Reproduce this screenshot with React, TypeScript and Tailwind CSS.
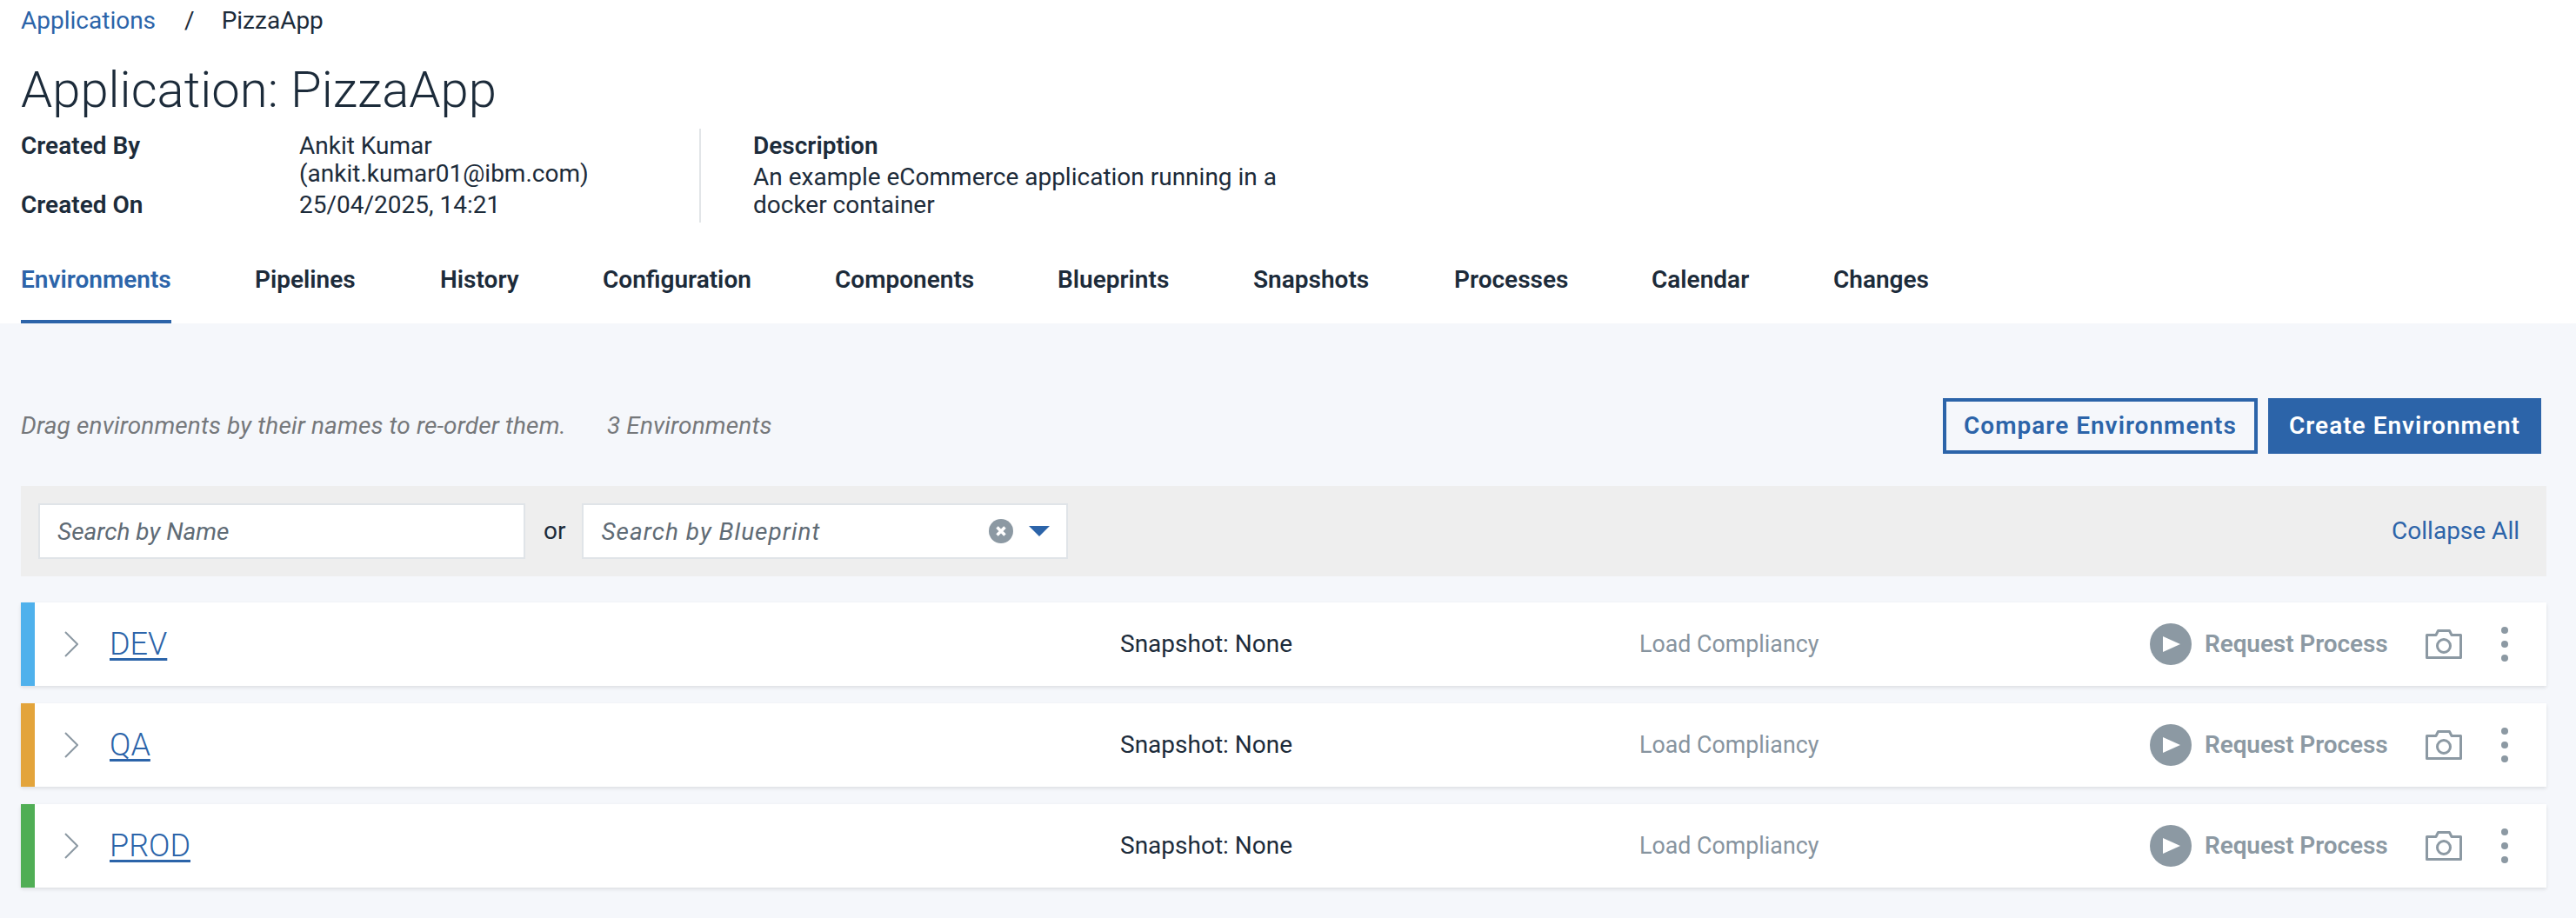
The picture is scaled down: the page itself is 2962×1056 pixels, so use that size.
const ROWS = [
  { name: "DEV", strip: "bg-[#4fb1ec]" },
  { name: "QA", strip: "bg-[#e3a43b]" },
  { name: "PROD", strip: "bg-[#50ae55]" },
];
const TABS = [
  { label: "Environments", w: "w-[173px]" },
  { label: "Pipelines", w: "w-[117px]" },
  { label: "History", w: "w-[91px]" },
  { label: "Configuration", w: "w-[171px]" },
  { label: "Components", w: "w-[160px]" },
  { label: "Blueprints", w: "w-[129px]" },
  { label: "Snapshots", w: "w-[135px]" },
  { label: "Processes", w: "w-[131px]" },
  { label: "Calendar", w: "w-[113px]" },
  { label: "Changes", w: "w-[109px]" },
];

function Chevron() {
  return (
    <svg width="16" height="30" viewBox="0 0 16 30" fill="none" className="shrink-0">
      <path d="M1 1 L15 15 L1 29" stroke="#8c99a3" strokeWidth="2" />
    </svg>
  );
}

function Camera() {
  return (
    <svg width="42" height="34" viewBox="0 0 42 34" fill="none" className="shrink-0">
      <path d="M1.500 6.500 H12 L14.500 1.500 H27.500 L30 6.500 H40.500 V32.500 H1.500 Z" stroke="#8c99a3" strokeWidth="3" strokeLinejoin="round" />
      <circle cx="21" cy="19" r="7.500" stroke="#8c99a3" strokeWidth="3" />
    </svg>
  );
}

function Play() {
  return (
    <svg width="48" height="48" viewBox="0 0 48 48" className="shrink-0">
      <circle cx="24" cy="24" r="24" fill="#8c99a3" />
      <path d="M15 15 V33 L35 24 Z" fill="#ffffff" />
    </svg>
  );
}

function Row({ name, strip }: { name: string; strip: string }) {
  return (
    <div className="flex h-[96px] w-[2904px] bg-white shadow-[0_2px_4px_rgba(0,0,0,0.1)]">
      <div className={`w-[16px] shrink-0 ${strip}`} />
      <div className="flex w-[1248px] shrink-0 items-center pl-[34px]">
        <Chevron />
        <a className="ml-[36px] text-[36px] font-light leading-[44px] text-[#2c64a9] underline decoration-[3px] underline-offset-[4px]">
          {name}
        </a>
      </div>
      <div className="flex w-[597px] shrink-0 items-center text-[28px] text-[#1c2b3a]">Snapshot: None</div>
      <div className="flex w-[587px] shrink-0 items-center text-[26.800px] text-[#87949f]">Load Compliancy</div>
      <div className="flex items-center">
        <Play />
        <span className="ml-[15px] w-[254px] shrink-0 whitespace-nowrap text-[28px] font-semibold tracking-[-0.1px] text-[#8c99a3]">
          Request Process
        </span>
        <Camera />
        <svg width="8" height="40" viewBox="0 0 8 40" className="ml-[45px] shrink-0">
          <circle cx="4" cy="4" r="4" fill="#8c99a3" />
          <circle cx="4" cy="20" r="4" fill="#8c99a3" />
          <circle cx="4" cy="36" r="4" fill="#8c99a3" />
        </svg>
      </div>
    </div>
  );
}

export default function App() {
  return (
    <div className="h-[1056px] w-[2962px] overflow-hidden bg-white font-['Roboto',sans-serif] text-[#1c2b3a]">
      <div className="flex h-[48px] items-center pl-[24px] text-[28px]">
        <a className="text-[#2c64a9]">Applications</a>
        <span className="ml-[33px]">/</span>
        <span className="ml-[31px]">PizzaApp</span>
      </div>
      <h1 className="ml-[24px] mt-[25px] h-[60px] text-[58px] font-light leading-[60px]">Application: PizzaApp</h1>
      <div className="ml-[24px] mt-[15px] flex h-[108px] text-[28px] leading-[32px]">
        <div className="grid w-[780px] shrink-0 grid-cols-[320px_1fr] grid-rows-[68px_32px] content-start pt-[4px]">
          <div className="font-semibold">Created By</div>
          <div>
            Ankit Kumar
            <br />
            (ankit.kumar01@ibm.com)
          </div>
          <div className="font-semibold">Created On</div>
          <div>25/04/2025, 14:21</div>
        </div>
        <div className="w-[2px] shrink-0 bg-[#e2e5e8]" />
        <div className="ml-[60px] w-[640px] pt-[4px]">
          <div className="mb-[4px] font-semibold">Description</div>
          <div>An example eCommerce application running in a docker container</div>
        </div>
      </div>
      <div className="mt-[30px] flex h-[86px] pl-[24px]">
        {TABS.map((t, i) => (
          <div
            key={t.label}
            className={`mr-[96px] flex shrink-0 items-center border-b-4 pb-[10px] text-[28px] font-semibold leading-[36px] ${t.w} ${
              i === 0 ? "border-[#2c64a9] text-[#2c64a9]" : "border-transparent"
            }`}
          >
            <span className="whitespace-nowrap">{t.label}</span>
          </div>
        ))}
      </div>
      <div className="h-[684px] bg-[#f5f7fb] px-[24px]">
        <div className="flex items-center pt-[86px]">
          <div className="flex w-[2210px] shrink-0 text-[28px] italic tracking-[0.12px] text-[#75787b]">
            <span className="w-[674px]">Drag environments by their names to re-order them.</span>
            <span>3 Environments</span>
          </div>
          <button className="flex h-[64px] w-[362px] items-center justify-center border-4 border-[#2c64a9] text-[28px] font-semibold tracking-[1px] text-[#2c64a9]">
            Compare Environments
          </button>
          <button className="ml-[12px] flex h-[64px] w-[314px] items-center justify-center bg-[#2c64a9] text-[28px] font-semibold tracking-[1px] text-white">
            Create Environment
          </button>
        </div>
        <div className="mt-[37px] flex h-[104px] w-[2904px] items-center bg-[#eeeeee] pl-[20px] pr-[31px]">
          <div className="flex h-[64px] w-[560px] items-center border-2 border-[#e0e4e8] bg-white pl-[20px] pt-[2px] text-[28px] italic text-[#5f6b75]">
            Search by Name
          </div>
          <span className="ml-[21px] text-[28px]">or</span>
          <div className="ml-[19px] flex h-[64px] w-[559px] items-center border-2 border-[#e0e4e8] bg-white pl-[20px] text-[28px] italic text-[#5f6b75]">
            <span className="w-[446px] whitespace-nowrap pt-[2px] tracking-[1px]">Search by Blueprint</span>
            <svg width="28" height="28" viewBox="0 0 28 28" className="shrink-0">
              <circle cx="14" cy="14" r="14" fill="#8c99a3" />
              <path d="M9.500 9.500 L18.500 18.500 M18.500 9.500 L9.500 18.500" stroke="#ffffff" strokeWidth="3.500" />
            </svg>
            <svg width="24" height="12" viewBox="0 0 24 12" className="ml-[18px] shrink-0">
              <path d="M0 0 H24 L12 12 Z" fill="#2c64a9" />
            </svg>
          </div>
          <a className="ml-auto text-[28px] text-[#2c64a9]">Collapse All</a>
        </div>
        <div className="mt-[30px] flex flex-col gap-[20px]">
          {ROWS.map((r) => (
            <Row key={r.name} {...r} />
          ))}
        </div>
      </div>
    </div>
  );
}
